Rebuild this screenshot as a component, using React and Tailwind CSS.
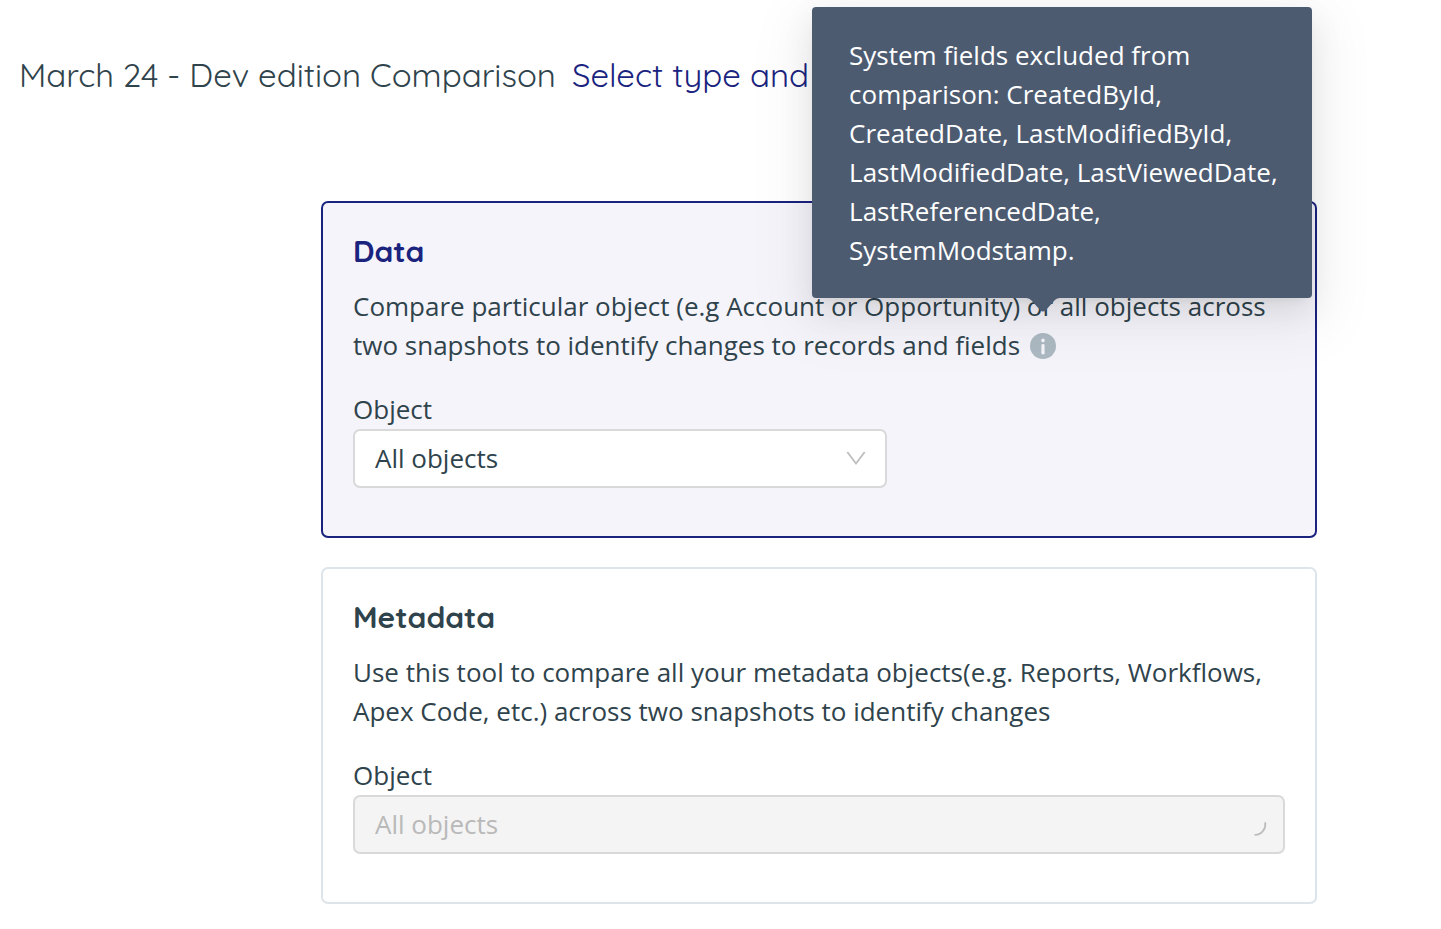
import React, { useId } from "react";

function InfoTooltip({ text }) {
  const id = useId();
  return (
    <span className="relative ml-[10px] inline-block h-[26px] w-[26px] align-[-4px]">
      <button
        type="button"
        aria-label="More information"
        aria-describedby={id}
        className="block h-[26px] w-[26px] rounded-full"
      >
        <svg viewBox="0 0 26 26" className="block h-full w-full" aria-hidden="true">
          <circle cx="13" cy="13" r="13" fill="#acb9c2" />
          <circle cx="13" cy="7.4" r="1.8" fill="#f5f4fa" />
          <rect x="11.4" y="11" width="3.2" height="10.4" rx="1.4" fill="#f5f4fa" />
        </svg>
      </button>
      <span
        id={id}
        role="tooltip"
        className="absolute bottom-full left-1/2 mb-[35px] ml-[-231px] block w-[500px] rounded-[4px] bg-[#4d5b71] pt-[29px] pr-[30px] pb-[28px] pl-[37px] text-white shadow-[0_6px_12px_-8px_rgba(0,0,0,0.12),0_12px_32px_0_rgba(0,0,0,0.08),0_18px_56px_16px_rgba(0,0,0,0.05)]"
      >
        {text}
        <svg viewBox="0 0 36 15" className="absolute top-full left-[213px] h-[15px] w-[36px]" aria-hidden="true">
          <path d="M0 0C4 0 5 1 7 3L15 12Q18 15 21 12L29 3C31 1 32 0 36 0Z" fill="#4d5b71" />
        </svg>
      </span>
    </span>
  );
}

function Card({ title, active, disabled, tooltip, children }) {
  const id = useId();
  return (
    <section
      className={`rounded-[7px] border-2 px-[30px] pt-[29px] pb-12 ${
        active ? "border-[#1a237e] bg-[#f5f4fa]" : "border-[#dde4ea] bg-white"
      }`}
    >
      <h2
        className={`font-[Quicksand,Lato,sans-serif] text-[30px] leading-[38px] font-bold ${
          active ? "text-[#1a237e]" : "text-[#2f434c]"
        }`}
      >
        {title}
      </h2>
      <p className="mt-[17px] leading-[39px]">
        {children}
        {tooltip && <InfoTooltip text={tooltip} />}
      </p>
      <label htmlFor={id} className="mt-[25px] block leading-[39px]">
        Object
      </label>
      <div className={`grid items-center ${active ? "max-w-[534px]" : ""}`}>
        <select
          id={id}
          disabled={disabled}
          className="col-start-1 row-start-1 h-[59px] w-full appearance-none rounded-[7px] border-2 border-[#d9d9d9] bg-white px-5 text-[#2f434c] opacity-100 disabled:bg-[#f4f4f4] disabled:text-[#b9b9b9]"
        >
          <option>All objects</option>
        </select>
        {disabled ? (
          <svg viewBox="0 0 26 26" className="pointer-events-none col-start-1 row-start-1 mr-[18px] h-[26px] w-[26px] justify-self-end" fill="none" aria-hidden="true">
            <path d="M24.3 11C25 17 20.5 22.6 14.2 22.8" stroke="#bdbdbd" strokeWidth="1.8" strokeLinecap="round" />
          </svg>
        ) : (
          <svg viewBox="0 0 20 16" className="pointer-events-none col-start-1 row-start-1 mr-[21px] h-4 w-5 justify-self-end" fill="none" aria-hidden="true">
            <path d="M1.3 1L10 12.5L18.7 1" stroke="#bfbfbf" strokeWidth="1.9" />
          </svg>
        )}
      </div>
    </section>
  );
}

export default function App() {
  return (
    <div className="overflow-x-hidden bg-white pb-[25px] font-['Open_Sans',sans-serif] text-[26px] leading-[39px] text-[#2f434c]">
      <header className="flex items-center gap-4 px-[19px] pt-[51px] font-[Quicksand,Lato,sans-serif] text-[33px] leading-[48px] whitespace-nowrap">
        <h1>March 24 - Dev edition Comparison</h1>
        <span className="text-[#1a237e]">Select type and</span>
      </header>
      <main className="mt-[102px] mr-[124px] ml-[321px] flex flex-col gap-[29px]">
        <Card
          title="Data"
          active
          tooltip="System fields excluded from comparison: CreatedById, CreatedDate, LastModifiedById, LastModifiedDate, LastViewedDate, LastReferencedDate, SystemModstamp."
        >
          Compare particular object (e.g Account or Opportunity) or all objects across two snapshots to identify
          changes to records and fields
        </Card>
        <Card title="Metadata" disabled>
          Use this tool to compare all your metadata objects(e.g. Reports, Workflows, Apex Code, etc.) across two
          snapshots to identify changes
        </Card>
      </main>
    </div>
  );
}
